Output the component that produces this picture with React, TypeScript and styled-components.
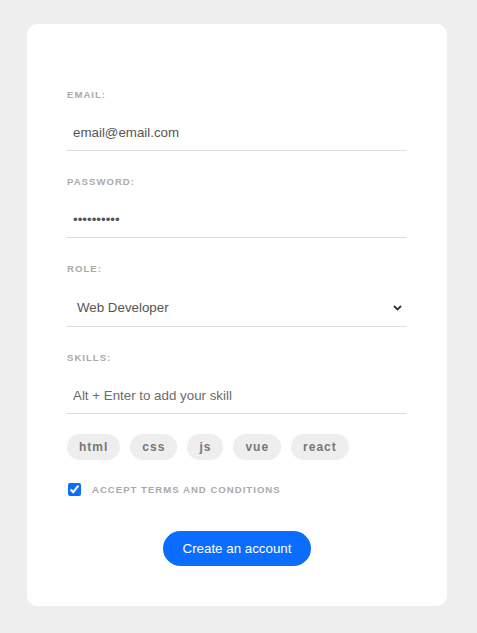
import React, { useState } from "react";
import styled, { createGlobalStyle } from "styled-components";

const GlobalStyle = createGlobalStyle`
  html, body {
    margin: 0;
    padding: 0;
    background: #eeeeee;
    font-family: "Liberation Sans", Arial, sans-serif;
  }
  * { box-sizing: border-box; }
`;

const Page = styled.div`
  display: flex;
  justify-content: flex-start;
  align-items: flex-start;
  padding: 24px 30px 27px 27px;
`;

const Card = styled.form`
  width: 420px;
  background: #fff;
  border-radius: 10px;
  padding: 40px;
  display: flex;
  flex-direction: column;
`;

const Label = styled.label`
  display: block;
  color: #aaa;
  font-size: 9.6px;
  line-height: 11px;
  font-weight: bold;
  letter-spacing: 1px;
  text-transform: uppercase;
  margin: 25px 0 15px;
`;

const Input = styled.input`
  display: block;
  width: 100%;
  padding: 10px 6px;
  height: 36px;
  border: none;
  border-bottom: 1px solid #ddd;
  color: #555;
  font-family: "Liberation Sans", Arial, sans-serif;
  font-size: 13.33px;
  outline: none;
  background: transparent;
  &::placeholder { color: #6b6b6b; }
`;

const SelectWrap = styled.div`
  position: relative;
`;

const Select = styled.select`
  display: block;
  width: 100%;
  height: 38px;
  padding: 10px 10px;
  border: none;
  border-bottom: 1px solid #ddd;
  color: #555;
  font-family: "Liberation Sans", Arial, sans-serif;
  font-size: 13.33px;
  appearance: none;
  background: transparent;
  outline: none;
`;

const Chevron = styled.svg`
  position: absolute;
  right: 5px;
  top: 16px;
  width: 9px;
  height: 6px;
  pointer-events: none;
`;

const Pills = styled.div`
  display: flex;
  gap: 10px;
  margin-top: 20px;
`;

const Pill = styled.span`
  display: inline-block;
  padding: 6px 12px;
  background: #eee;
  border-radius: 20px;
  font-size: 12px;
  line-height: 14px;
  letter-spacing: 1px;
  font-weight: bold;
  color: #777;
`;

const TermsRow = styled.div`
  display: flex;
  align-items: center;
  margin-top: 23px;
`;

const Checkbox = styled.input`
  width: 13px;
  height: 13px;
  margin: 0 11px 0 1px;
  accent-color: #0b6dff;
`;

const TermsLabel = styled.label`
  color: #aaa;
  font-size: 9.6px;
  line-height: 11px;
  font-weight: bold;
  letter-spacing: 1px;
  text-transform: uppercase;
`;

const Submit = styled.div`
  display: flex;
  justify-content: center;
  margin-top: 35px;
`;

const Button = styled.button`
  background: #0b6dff;
  border: 0;
  padding: 10px 20px;
  height: 35px;
  color: #fff;
  border-radius: 20px;
  font-family: "Liberation Sans", Arial, sans-serif;
  font-size: 13.33px;
  line-height: 15px;
`;

export default function App() {
  const [email, setEmail] = useState("email@email.com");
  const [password, setPassword] = useState("password12");
  const [role, setRole] = useState("developer");
  const [terms, setTerms] = useState(true);
  const skills = ["html", "css", "js", "vue", "react"];

  return (
    <>
      <GlobalStyle />
      <Page>
        <Card onSubmit={(e) => e.preventDefault()}>
          <Label>Email:</Label>
          <Input type="email" value={email} onChange={(e) => setEmail(e.target.value)} />
          <Label>Password:</Label>
          <Input type="password" value={password} onChange={(e) => setPassword(e.target.value)} />
          <Label>Role:</Label>
          <SelectWrap>
            <Select value={role} onChange={(e) => setRole(e.target.value)}>
              <option value="developer">Web Developer</option>
              <option value="designer">Web Designer</option>
            </Select>
            <Chevron viewBox="0 0 9 6">
              <path d="M1 1 L4.5 4.5 L8 1" fill="none" stroke="#333" strokeWidth="1.8" />
            </Chevron>
          </SelectWrap>
          <Label>Skills:</Label>
          <Input type="text" placeholder="Alt + Enter to add your skill" />
          <Pills>
            {skills.map((s) => (
              <Pill key={s}>{s}</Pill>
            ))}
          </Pills>
          <TermsRow>
            <Checkbox type="checkbox" checked={terms} onChange={(e) => setTerms(e.target.checked)} />
            <TermsLabel>Accept terms and conditions</TermsLabel>
          </TermsRow>
          <Submit>
            <Button type="submit">Create an account</Button>
          </Submit>
        </Card>
      </Page>
    </>
  );
}
